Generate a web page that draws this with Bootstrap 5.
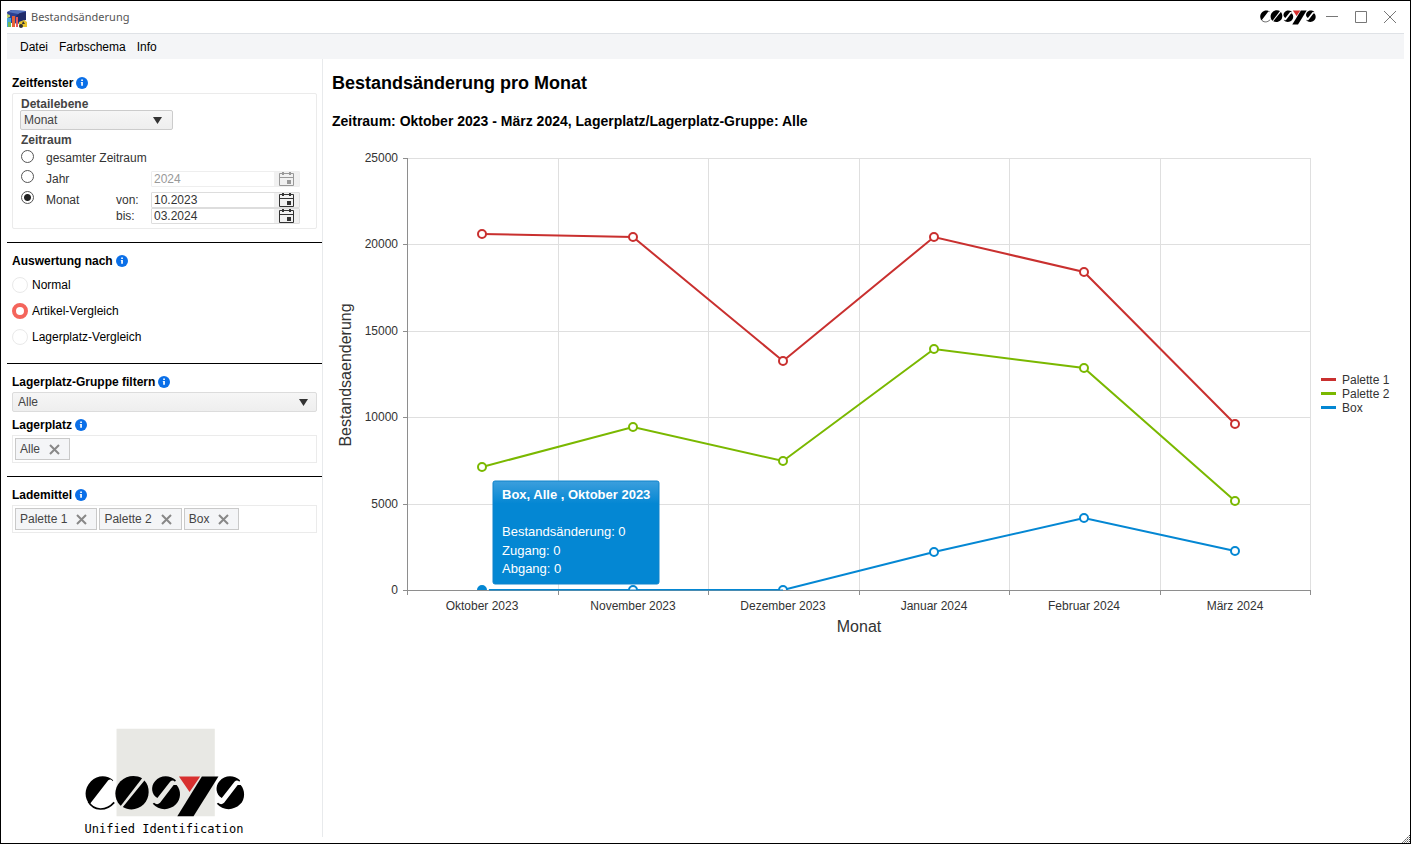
<!DOCTYPE html>
<html lang="de">
<head>
<meta charset="utf-8">
<meta name="viewport" content="width=device-width, initial-scale=1">
<title>Bestandsänderung</title>
<link href="https://cdn.jsdelivr.net/npm/bootstrap@5.3.0/dist/css/bootstrap.min.css" rel="stylesheet">
<style>
  body { font: 12px/16px "Liberation Sans", Arial, sans-serif; color: #000; background: #fff; }
  .app-window { min-height: 100vh; border: 1px solid #000; padding: 0 6px 6px; }
  .title-bar { height: 32px; }
  .title-text { font-family: "Noto Sans", "Open Sans", sans-serif; font-size: 11px; color: #555; }
  .win-controls { gap: 17px; margin: 0 8px 0 10px; }
  .win-btn { width: 12px; height: 12px; padding: 0; border: 0; background: none; color: #777; line-height: 0; }
  .menu-bar { height: 26px; background: #f4f5f7; border-top: 1px solid #dfe2e6; padding-left: 13px; gap: 11px; }
  .menu-bar a { color: #000; text-decoration: none; }
  .side-panel { width: 316px; border-right: 1px solid #e8eaec; padding-top: 6px; }
  .side-section { padding: 10px 5px 13px; border-bottom: 1px solid #000; }
  .side-section.last-section { border-bottom: 0; }
  .section-title { font-size: 12px; line-height: 16px; font-weight: 700; margin: 0 0 2px; display: flex; align-items: center; gap: 3px; }
  .next-title { margin-top: 5px; }
  .group-box { border: 1px solid #ebebeb; border-radius: 2px; padding: 4px 16px 4px 8px; color: #333; }
  .group-title { display: block; font-weight: 700; line-height: 12px; color: #444; }
  .form-select.flat-select {
    --bs-form-select-bg-img: url("data:image/svg+xml,%3Csvg xmlns='http://www.w3.org/2000/svg' viewBox='0 0 9 7'%3E%3Cpath d='M0 0h9L4.500 7z' fill='%23333'/%3E%3C/svg%3E");
    background-image: var(--bs-form-select-bg-img), linear-gradient(#f6f6f6, #eee);
    background-size: 9px 7px, 100% 100%; background-position: right 8px center, 0 0; background-repeat: no-repeat;
    height: 20px; font-size: 12px; line-height: 16px; padding: 0 20px 0 5px; border: 1px solid #dcdcdc; border-radius: 2px; color: #444;
  }
  .form-select.level-select { width: 153px; margin: 0 0 4px -1px; padding-left: 3px; border-color: #ccc; background-position: right 10px center, 0 0; }
  .period-grid { display: grid; grid-template-columns: 25px 70px 35px minmax(0, 1fr); grid-template-rows: 16px 21px 21px 16px; align-items: center; margin-top: 4px; }
  .ring-radio { appearance: none; width: 13px; height: 13px; margin: 0; border: 1px solid #555; border-radius: 50%; background: #fff; display: block; align-self: start; }
  .ring-radio:checked { background: radial-gradient(circle, #222 0 3px, #fff 4px); }
  .row-space { margin-top: 5px; }
  .ring-radio.row-space { margin-top: 4px; }
  .date-box { display: flex; height: 16px; border: 1px solid #ddd; border-radius: 1px; }
  .date-box input { flex: 1 1 0; width: 0; min-width: 0; border: 0; padding: 0 2px; height: 14px; line-height: 14px; color: #333; background: #fff; }
  .date-box button { width: 25px; border: 0; padding: 0; background: #f1f1f1; line-height: 0; color: #333; }
  .date-box.is-off input, .date-box.is-off button { color: #999; }
  .date-box.is-off { border-color: #eee; }
  .mode-list { padding-top: 1px; }
  .mode-row { display: flex; align-items: center; height: 26px; gap: 4px; }
  .mode-row input { appearance: none; width: 16px; height: 16px; margin: 0; border: 1px solid #e9e9e9; border-radius: 50%; background: #fff; }
  .mode-row input:checked { border: 4px solid #f4655c; }
  .tag-box { border: 1px solid #ebebeb; height: 28px; padding: 2px; gap: 2px; }
  .tag-item { height: 22px; border: 1px solid #c9c9c9; background: #f4f5f7; color: #444; padding: 0 9px 0 4px; gap: 9px; }
  .tag-item button { border: 0; background: none; padding: 0; line-height: 0; color: #888; }
  .brand-box { color: #000; width: 160px; }
  .brand-claim { font: 12px/16px "DejaVu Sans Mono", monospace; white-space: nowrap; margin-top: 4px; }
  .chart-title { font-size: 18px; line-height: 24px; font-weight: 700; margin: 0 0 16px; }
  .chart-sub { font-size: 14px; line-height: 20px; font-weight: 700; margin: 0 0 15px; }
  .chart-head { padding: 12px 0 0 9px; }
  .chart-svg { display: block; width: 100%; height: auto; font-size: 12px; fill: #333; }
  .axis-title { font-size: 16px; }
  .grip { position: absolute; right: 0; bottom: 0; }
</style>
</head>
<body>
<svg width="0" height="0" class="position-absolute" aria-hidden="true">
  <defs>
    <symbol id="brand-letters" viewBox="46 166 482 124" overflow="visible">
      <path d="M131 179C112 163 84 163 64 182C43 203 43 232 60 252L116 179C121 176 126 177 129 182Z"/>
      <path d="M56 244C72 272 109 274 134 246" fill="none" stroke="#000" stroke-width="5"/>
      <path d="M218 173C199 162 171 164 153 182C132 203 133 234 151 254L154 256Z"/>
      <path d="M225 180C243 198 242 233 223 252C205 270 178 271 160 260Z"/>
      <path d="M320 179C300 162 272 164 257 182C243 198 246 222 264 233L303 183C308 179 313 180 317 184Z"/>
      <path d="M322 194C337 211 335 238 320 252C299 273 267 270 250 250L254 247C260 253 266 253 272 247L313 194Z"/>
      <path d="M329 168H393L361 215Z" fill="#d8302f"/>
      <path d="M398 168H448L373 288H324Z"/>
      <path d="M513 179C494 162 466 164 451 182C437 198 440 222 458 233L497 183C502 179 507 180 511 184Z"/>
      <path d="M515 194C530 211 528 238 513 252C492 273 460 270 443 250L447 247C453 253 459 253 465 247L506 194Z"/>
    </symbol>
    <symbol id="info" viewBox="0 0 12 12"><circle cx="6" cy="6" r="6" fill="#0a6fe8"/><path d="M5.200 2.500h1.700v1.500H5.200zM4.800 5h2.100v3.800H5.200V5.800h-.4z" fill="#fff"/></symbol>
    <symbol id="cross" viewBox="0 0 11 11"><path d="M1 1l9 9M10 1l-9 9" stroke="currentColor" stroke-width="2" fill="none"/></symbol>
    <symbol id="cal" viewBox="0 0 15 14"><path d="M.5 1.500h14v12H.5zM.5 5.500h14" fill="none" stroke="currentColor"/><path d="M3 0h2v3H3zM10 0h2v3h-2zM8 8h4v4H8z" fill="currentColor"/></symbol>
  </defs>
</svg>

<div class="app-window d-flex flex-column position-relative">
  <header class="title-bar d-flex align-items-center">
    <svg width="20" height="20" viewBox="0 0 20 20" class="me-1 mt-1" aria-hidden="true">
      <path d="M0 3l4-2 15 1v7l-4 6-11-1-3-5z" fill="#2c3f92"/><path d="M1 3l4-2 14 1-8 3z" fill="#5572bd"/><path d="M9 7l4-3 6-1v8l-8 2z" fill="#202b69"/>
      <path d="M0 9h4v9H0z" fill="#45a7d8"/><path d="M5 7h3v11H5z" fill="#e66236"/><path d="M9 8h2v10H9z" fill="#e8585d"/><path d="M1 13h3v5H1z" fill="#70b956"/><path d="M0 5l3 1v2L0 9z" fill="#b7cf6a"/>
      <path d="M12 13l5-2 3 2v5h-8z" fill="#e8c42c"/><circle cx="14" cy="17" r="2" fill="#333"/><path d="M16 12l2 3h-3z" fill="#333"/>
    </svg>
    <span class="title-text">Bestandsänderung</span>
    <svg class="ms-auto" width="56" height="15" aria-label="COSYS"><use href="#brand-letters"/></svg>
    <div class="win-controls d-flex">
      <button class="win-btn" aria-label="Minimieren"><svg width="12" height="12"><path d="M0 5.500h12" stroke="currentColor"/></svg></button>
      <button class="win-btn" aria-label="Maximieren"><svg width="12" height="12"><path d="M.5.5h11v11H.5z" stroke="currentColor" fill="none"/></svg></button>
      <button class="win-btn" aria-label="Schließen"><svg width="12" height="12"><path d="M0 0l12 12M12 0L0 12" stroke="currentColor"/></svg></button>
    </div>
  </header>
  <nav class="menu-bar d-flex align-items-center"><a href="#">Datei</a><a href="#">Farbschema</a><a href="#">Info</a></nav>

  <div class="d-flex flex-grow-1">
    <aside class="side-panel d-flex flex-column flex-shrink-0">
      <section class="side-section">
        <h2 class="section-title">Zeitfenster <svg width="12" height="12"><use href="#info"/></svg></h2>
        <div class="group-box">
          <label class="group-title" for="level">Detailebene</label>
          <select id="level" class="form-select flat-select level-select"><option>Monat</option></select>
          <span class="group-title">Zeitraum</span>
          <div class="period-grid">
            <input class="ring-radio" type="radio" name="period" id="p-all"><label for="p-all" style="grid-column:span 3">gesamter Zeitraum</label>
            <input class="ring-radio row-space" type="radio" name="period" id="p-year"><label class="row-space" for="p-year" style="grid-column:span 2">Jahr</label>
            <div class="date-box is-off row-space"><input type="text" value="2024" aria-label="Jahr" disabled><button aria-label="Kalender" disabled><svg width="15" height="14"><use href="#cal"/></svg></button></div>
            <input class="ring-radio row-space" type="radio" name="period" id="p-month" checked><label class="row-space" for="p-month">Monat</label>
            <label class="row-space" for="from">von:</label>
            <div class="date-box row-space"><input type="text" id="from" value="10.2023"><button aria-label="Kalender"><svg width="15" height="14"><use href="#cal"/></svg></button></div>
            <label for="to" style="grid-column:3">bis:</label>
            <div class="date-box"><input type="text" id="to" value="03.2024"><button aria-label="Kalender"><svg width="15" height="14"><use href="#cal"/></svg></button></div>
          </div>
        </div>
      </section>

      <section class="side-section">
        <h2 class="section-title">Auswertung nach <svg width="12" height="12"><use href="#info"/></svg></h2>
        <div class="mode-list">
          <div class="mode-row"><input type="radio" name="mode" id="m1"><label for="m1">Normal</label></div>
          <div class="mode-row"><input type="radio" name="mode" id="m2" checked><label for="m2">Artikel-Vergleich</label></div>
          <div class="mode-row"><input type="radio" name="mode" id="m3"><label for="m3">Lagerplatz-Vergleich</label></div>
        </div>
      </section>

      <section class="side-section">
        <h2 class="section-title"><label for="group">Lagerplatz-Gruppe filtern</label> <svg width="12" height="12"><use href="#info"/></svg></h2>
        <select id="group" class="form-select flat-select"><option>Alle</option></select>
        <h2 class="section-title next-title">Lagerplatz <svg width="12" height="12"><use href="#info"/></svg></h2>
        <div class="tag-box d-flex">
          <span class="tag-item d-flex align-items-center">Alle <button aria-label="Alle entfernen"><svg width="11" height="11"><use href="#cross"/></svg></button></span>
        </div>
      </section>

      <section class="side-section last-section">
        <h2 class="section-title">Lademittel <svg width="12" height="12"><use href="#info"/></svg></h2>
        <div class="tag-box d-flex">
          <span class="tag-item d-flex align-items-center">Palette 1 <button aria-label="Palette 1 entfernen"><svg width="11" height="11"><use href="#cross"/></svg></button></span>
          <span class="tag-item d-flex align-items-center">Palette 2 <button aria-label="Palette 2 entfernen"><svg width="11" height="11"><use href="#cross"/></svg></button></span>
          <span class="tag-item d-flex align-items-center">Box <button aria-label="Box entfernen"><svg width="11" height="11"><use href="#cross"/></svg></button></span>
        </div>
      </section>

      <div class="brand-box mt-auto mx-auto">
        <svg class="d-block" width="160" height="89" viewBox="46 22 482 268" aria-label="COSYS"><path d="M141 24h296v264H141z" fill="#e8e8e4"/><use href="#brand-letters" x="46" y="166" width="482" height="124"/></svg>
        <div class="brand-claim">Unified Identification</div>
      </div>
    </aside>

    <main class="flex-grow-1">
      <div class="chart-head">
        <h1 class="chart-title">Bestandsänderung pro Monat</h1>
        <p class="chart-sub">Zeitraum: Oktober 2023 - März 2024, Lagerplatz/Lagerplatz-Gruppe: Alle</p>
      </div>
      <svg class="chart-svg" viewBox="0 0 1081 500" role="img" aria-label="Bestandsänderung pro Monat">
        <clipPath id="plot"><path d="M80 0h920v444H80z"/></clipPath>
        <path d="M84 12.500H987M84 98.500H987M84 185.500H987M84 271.500H987M84 358.500H987M235.500 12V444M385.500 12V444M536.500 12V444M686.500 12V444M837.500 12V444M987.500 12V444" stroke="#dfdfdf" fill="none"/>
        <path d="M84.500 12V449M80 12.500h4M80 98.500h4M80 185.500h4M80 271.500h4M80 358.500h4M80 444.500H988M235.500 444v5M385.500 444v5M536.500 444v5M686.500 444v5M837.500 444v5M987.500 444v5" stroke="#8e8e8e" fill="none"/>
        <g text-anchor="end">
          <text x="75" y="16">25000</text><text x="75" y="102">20000</text><text x="75" y="189">15000</text><text x="75" y="275">10000</text><text x="75" y="362">5000</text><text x="75" y="448">0</text>
        </g>
        <g text-anchor="middle">
          <text x="159" y="464">Oktober 2023</text><text x="310" y="464">November 2023</text><text x="460" y="464">Dezember 2023</text><text x="611" y="464">Januar 2024</text><text x="761" y="464">Februar 2024</text><text x="912" y="464">März 2024</text>
          <text class="axis-title" x="536" y="486">Monat</text>
          <text class="axis-title" transform="translate(28 229) rotate(-90)">Bestandsaenderung</text>
        </g>
        <g clip-path="url(#plot)" stroke-width="2" fill="none">
          <g stroke="#c9302f"><path d="M159 88L310 91L460 215L611 91L761 126L912 278"/>
            <g fill="#fff"><circle cx="159" cy="88" r="4"/><circle cx="310" cy="91" r="4"/><circle cx="460" cy="215" r="4"/><circle cx="611" cy="91" r="4"/><circle cx="761" cy="126" r="4"/><circle cx="912" cy="278" r="4"/></g></g>
          <g stroke="#7ab800"><path d="M159 321L310 281L460 315L611 203L761 222L912 355"/>
            <g fill="#fff"><circle cx="159" cy="321" r="4"/><circle cx="310" cy="281" r="4"/><circle cx="460" cy="315" r="4"/><circle cx="611" cy="203" r="4"/><circle cx="761" cy="222" r="4"/><circle cx="912" cy="355" r="4"/></g></g>
          <g stroke="#0487d3"><path d="M159 444H460L611 406L761 372L912 405"/>
            <circle cx="159" cy="444" r="6" fill="#0487d3" stroke="#fff"/>
            <g fill="#fff"><circle cx="310" cy="444" r="4"/><circle cx="460" cy="444" r="4"/><circle cx="611" cy="406" r="4"/><circle cx="761" cy="372" r="4"/><circle cx="912" cy="405" r="4"/></g></g>
        </g>
        <path d="M166 444H460" stroke="#0487d3" fill="none"/>
        <g>
          <path d="M998 232h15v3h-15z" fill="#c9302f"/><path d="M998 246h15v3h-15z" fill="#7ab800"/><path d="M998 260h15v3h-15z" fill="#0487d3"/>
          <text x="1019" y="238">Palette 1</text><text x="1019" y="252">Palette 2</text><text x="1019" y="266">Box</text>
        </g>
        <linearGradient id="tip" x2="0" y2="1"><stop offset="0" stop-color="#3c9fdd"/><stop offset=".22" stop-color="#0487d3"/></linearGradient>
        <g font-size="13">
          <rect x="170" y="335" width="166" height="103" rx="2" fill="url(#tip)" stroke="#0f83cb"/>
          <g fill="#fff"><text x="179" y="353" font-weight="700">Box, Alle , Oktober 2023</text><text x="179" y="390">Bestandsänderung: 0</text><text x="179" y="409">Zugang: 0</text><text x="179" y="427">Abgang: 0</text></g>
        </g>
      </svg>
    </main>
  </div>
  <svg class="grip" width="8" height="8" aria-hidden="true"><path d="M8 0L0 8M8 2L2 8M8 4L4 8M8 6L6 8" stroke="#444" stroke-width="1" stroke-dasharray="2 1"/></svg>
</div>
<script src="https://cdn.jsdelivr.net/npm/bootstrap@5.3.0/dist/js/bootstrap.bundle.min.js"></script>
</body>
</html>
